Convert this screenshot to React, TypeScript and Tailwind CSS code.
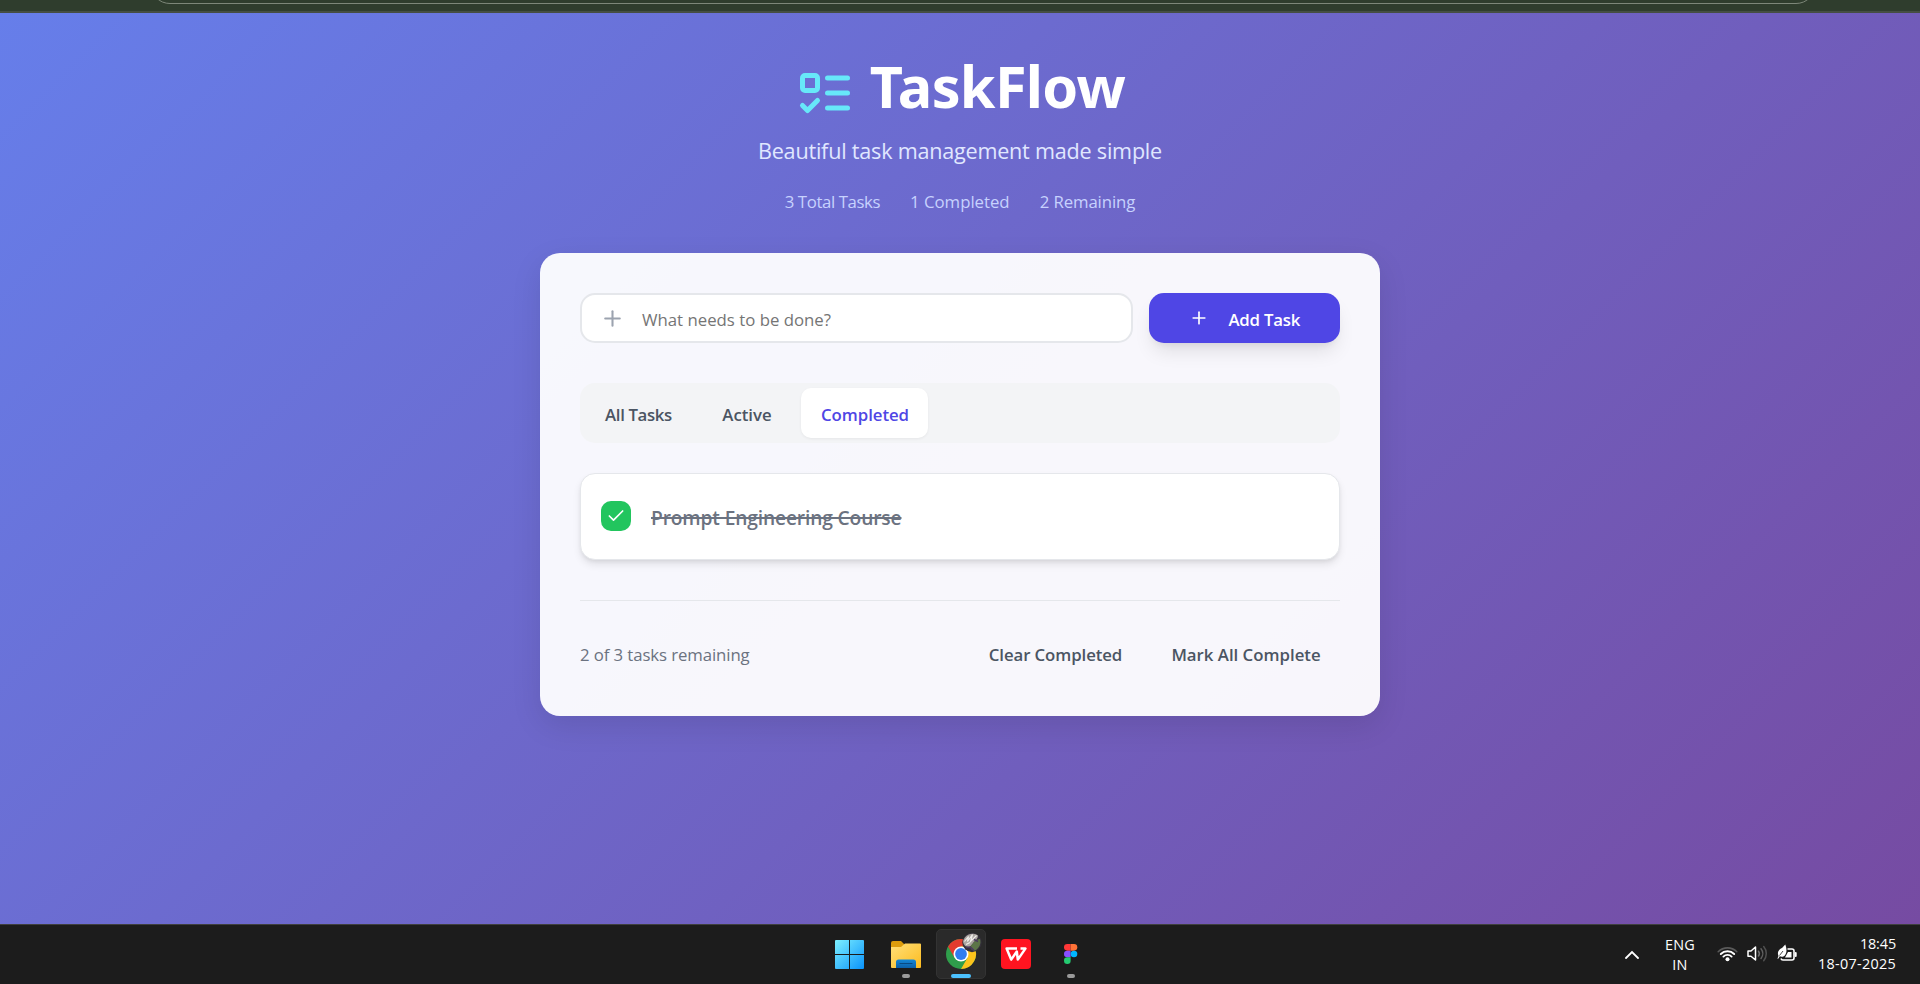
import React from "react";

type IconProps = { className: string; children: React.ReactNode };

function StrokeIcon({ className, children }: IconProps) {
  return (
    <svg
      className={className}
      viewBox="0 0 24 24"
      fill="none"
      stroke="currentColor"
      strokeWidth="2"
      strokeLinecap="round"
      strokeLinejoin="round"
    >
      {children}
    </svg>
  );
}

function PlusIcon({ className }: { className: string }) {
  return (
    <StrokeIcon className={className}>
      <path d="M5 12h14" />
      <path d="M12 5v14" />
    </StrokeIcon>
  );
}

function BrowserEdge() {
  return (
    <div className="flex h-[13px] shrink-0 justify-center overflow-hidden border-b-2 border-[#454e43] bg-[#2f3d2d] pl-[45px]">
      <div className="-mt-9 h-10 w-[1666px] rounded-[20px] border border-[#7d8779] bg-[#2f3d2d]" />
    </div>
  );
}

function Header() {
  return (
    <header className="flex flex-col items-center">
      <div className="flex h-[60px] gap-[15px]">
        <StrokeIcon className="mt-[7px] size-[60px] text-[#67e8f9]">
          <rect x="3" y="5" width="6" height="6" rx="1" />
          <path d="m3 17 2 2 4-4" />
          <path d="M13 6h8" />
          <path d="M13 12h8" />
          <path d="M13 18h8" />
        </StrokeIcon>
        <h1 className="font-['Noto_Sans',sans-serif] text-[57.6px] leading-[60px] font-bold tracking-[-0.67px] text-white">
          TaskFlow
        </h1>
      </div>
      <p className="mt-5 text-[21.6px] leading-[29px] tracking-[-0.22px] text-[#e0e7ff]">
        Beautiful task management made simple
      </p>
      <div className="mt-[25px] flex gap-[30px] text-[16.8px] leading-[23px] text-[#c7d2fe]">
        <span className="tracking-[-0.4px]">3 Total Tasks</span>
        <span className="tracking-[-0.02px]">1 Completed</span>
        <span className="tracking-[-0.1px]">2 Remaining</span>
      </div>
    </header>
  );
}

function TaskCard() {
  return (
    <main className="mx-auto mt-10 h-[463px] w-[840px] rounded-[20px] bg-white/95 p-10 text-[16.8px] shadow-[0_10px_30px_rgba(0,0,0,0.1)]">
      <div className="flex h-[50px] gap-4">
        <div className="flex flex-1 items-center gap-[17px] rounded-[15px] border-2 border-[#e5e7eb] bg-white pl-[18px]">
          <PlusIcon className="size-[25px] text-[#9ca3af]" />
          <span className="pt-[3px] leading-6 text-[#757575]">What needs to be done?</span>
        </div>
        <button className="flex w-[191px] items-center gap-[19.5px] rounded-[15px] bg-[#4f46e5] pl-10 font-semibold text-white shadow-[0_12px_19px_-4px_rgba(0,0,0,0.1),0_5px_8px_-5px_rgba(0,0,0,0.1)]">
          <PlusIcon className="size-5" />
          <span className="pt-[3px] leading-6 tracking-[-0.22px]">Add Task</span>
        </button>
      </div>

      <nav className="mt-10 flex h-[60px] gap-[10px] rounded-[15px] bg-[#f3f4f6] p-[5px] font-semibold text-[#4b5563]">
        <button className="w-[107px] rounded-[10px] pt-[4px] tracking-[-0.35px]">All Tasks</button>
        <button className="w-[89px] rounded-[10px] pt-[4px] pl-px">Active</button>
        <button className="w-[127px] rounded-[10px] bg-white pt-[4px] pl-px tracking-[-0.05px] text-[#4f46e5] shadow-[0_1px_3px_rgba(0,0,0,0.06)]">
          Completed
        </button>
      </nav>

      <div className="mt-[30px] flex h-[87px] items-center gap-5 rounded-[15px] border border-[#e5e7eb] bg-white px-5 shadow-[0_5px_8px_-1px_rgba(0,0,0,0.1),0_2px_5px_-2px_rgba(0,0,0,0.1)]">
        <div className="mb-px flex size-[30px] items-center justify-center rounded-[10px] bg-[#22c55e] text-white">
          <StrokeIcon className="size-5">
            <path d="M20 6 9 17l-5-5" />
          </StrokeIcon>
        </div>
        <span className="pt-[3px] text-[19.2px] leading-7 font-semibold tracking-[-0.14px] text-[#6b7280] line-through decoration-2">
          Prompt Engineering Course
        </span>
      </div>

      <footer className="mt-10 flex h-[76px] items-center justify-between border-t border-[#e5e7eb] pt-[32px] text-[#4b5563]">
        <span className="tracking-[-0.1px] text-[#6b7280]">2 of 3 tasks remaining</span>
        <div className="flex gap-[10px] font-semibold">
          <button className="w-[173px] tracking-[-0.09px]">Clear Completed</button>
          <button className="w-[188px]">Mark All Complete</button>
        </div>
      </footer>
    </main>
  );
}

function StartIcon() {
  return (
    <svg className="-ml-[3px] size-[29px]" viewBox="0 0 29 29">
      <defs>
        <linearGradient id="win" x1="0" y1="0" x2="1" y2="1">
          <stop offset="0" stopColor="#7df0ff" />
          <stop offset="1" stopColor="#0a93fb" />
        </linearGradient>
      </defs>
      <path
        fill="url(#win)"
        d="M1 0h13v14H0V1a1 1 0 0 1 1-1ZM15 0h13a1 1 0 0 1 1 1v13H15ZM0 15h14v14H1a1 1 0 0 1-1-1ZM15 15h14v13a1 1 0 0 1-1 1H15Z"
      />
    </svg>
  );
}

function FolderIcon() {
  return (
    <svg className="h-[27px] w-[30px]" viewBox="0 0 30 27">
      <defs>
        <linearGradient id="fold" x1="0" y1="0" x2="1" y2="1">
          <stop offset="0" stopColor="#ffe07a" />
          <stop offset="1" stopColor="#fdbb1e" />
        </linearGradient>
        <linearGradient id="tray" x1="0" y1="0" x2="0" y2="1">
          <stop offset="0" stopColor="#1488d8" />
          <stop offset="1" stopColor="#0c5fa8" />
        </linearGradient>
      </defs>
      <path d="M0 2a2 2 0 0 1 2-2h8l3 3v3H0Z" fill="#dc9c0c" />
      <path d="M0 6h10l4-3.5h15a1 1 0 0 1 1 1V26a1 1 0 0 1-1 1H1a1 1 0 0 1-1-1Z" fill="url(#fold)" />
      <path d="M5 27v-6a2.500 2.500 0 0 1 2.500-2.500h15A2.500 2.500 0 0 1 25 21v6Z" fill="url(#tray)" />
      <path d="M9 22.500h12" stroke="#094a82" strokeWidth="1" strokeLinecap="round" />
    </svg>
  );
}

function ChromeIcon() {
  return (
    <svg className="size-10 overflow-visible" viewBox="0 0 40 40">
      <circle cx="20" cy="20" r="15" fill="#2f9e4b" />
      <path d="M7 12.500A15 15 0 0 1 33 12.500H20L13.500 23.750Z" fill="#e33b2e" />
      <path d="M20 12.500H33A15 15 0 0 1 20 35L26.500 23.750Z" fill="#fcc31c" />
      <circle cx="20" cy="20" r="7.500" fill="#fff" />
      <circle cx="20" cy="20" r="5.900" fill="#2f7df0" />
      <g transform="translate(0 4.500)">
        <circle cx="31" cy="4" r="9.700" fill="#34303a" />
        <path d="M22 3.500a9.500 9.500 0 0 1 15-6.500c0 3-2 4.500-4 6.500s-3 5-6 5c-2 0-4.500-2-5-5Z" fill="#aaa5a0" />
        <path d="m23.500 3 4-5-1 5 5-7-2 7 6-6M25 6l4-2" stroke="#efedea" strokeWidth="1.200" fill="none" />
        <path d="M30 7c3-3 5-6 9-6.500 1.500 5-1 9.500-5 11.500-3 0-5.500-2-4-5Z" fill="#5c7548" />
        <path d="m25 8.500 5 .5 3 3M33 1l4 2" stroke="#4b3a5f" strokeWidth="1.500" fill="none" />
      </g>
    </svg>
  );
}

function WpsIcon() {
  return (
    <svg className="size-[30px]" viewBox="0 0 30 30">
      <rect width="30" height="30" rx="4" fill="#ff1420" />
      <path
        d="M16 9.600H5.600L10.200 20.600 15.800 12.500 16.800 20.600 24.400 9.600H19.500"
        fill="none"
        stroke="#fff"
        strokeWidth="2.500"
        strokeLinejoin="round"
      />
    </svg>
  );
}

function FigmaIcon() {
  return (
    <svg className="h-5 w-[13.3px]" viewBox="0 0 40 60">
      <path d="M20 0H10a10 10 0 0 0 0 20h10Z" fill="#ff3737" />
      <path d="M20 0h10a10 10 0 0 1 0 20H20Z" fill="#ff7237" />
      <path d="M20 20H10a10 10 0 0 0 0 20h10Z" fill="#874fff" />
      <circle cx="30" cy="30" r="10" fill="#00b6ff" />
      <path d="M20 40H10a10 10 0 1 0 10 10Z" fill="#24cb71" />
    </svg>
  );
}

type SlotProps = { children: React.ReactNode; state?: "active" | "open" };

function TaskbarSlot({ children, state }: SlotProps) {
  return (
    <div
      className={
        state === "active"
          ? "relative flex size-[50px] items-center justify-center rounded-[5px] border border-[#333333] bg-[#2a2a2a]"
          : "relative flex size-[50px] items-center justify-center"
      }
    >
      {children}
      {state === "active" && (
        <span className="absolute bottom-0 left-[14px] h-1 w-5 rounded-full bg-[#4cc2ff]" />
      )}
      {state === "open" && (
        <span className="absolute bottom-px left-[21px] h-1 w-2 rounded-full bg-[#9a9a9a]" />
      )}
    </div>
  );
}

function SystemTray() {
  return (
    <div className="flex flex-1 items-center justify-end pr-6 text-white">
      <svg className="mr-[26px] h-[9px] w-[14px]" viewBox="0 0 14 9">
        <path d="m1 8 6-6 6 6" fill="none" stroke="#fff" strokeWidth="1.800" strokeLinecap="round" />
      </svg>
      <div className="mr-[22px] w-[30px] pt-px text-center text-[14.4px] leading-5 tracking-[0.2px]">
        <p>ENG</p>
        <p>IN</p>
      </div>
      <div className="mr-[20px] flex items-center gap-[9px]">
        <svg className="-mt-px h-[17px] w-[21px]" viewBox="0 0 21 17" fill="none" strokeWidth="1.600" strokeLinecap="round">
          <path d="M1.200 6.700a13.200 13.200 0 0 1 18.600 0" stroke="#5a5a5a" />
          <path d="M3.800 9a9.500 9.500 0 0 1 13.400 0" stroke="#fff" strokeWidth="1.900" />
          <path d="M6.400 11.600a5.800 5.800 0 0 1 8.200 0" stroke="#fff" strokeWidth="1.900" />
          <circle cx="10.500" cy="14.300" r="2" fill="#fff" />
        </svg>
        <svg className="-mt-px h-[17px] w-[21px]" viewBox="0 0 21 17" fill="none" strokeWidth="1.500" strokeLinecap="round" strokeLinejoin="round">
          <path d="M1 6h3l4.500-4v13L4 11.200H1Z" stroke="#fff" />
          <path d="M11.500 6.200a4 4 0 0 1 0 4.800" stroke="#707070" />
          <path d="M14 3.800a7.500 7.500 0 0 1 0 9.600" stroke="#606060" />
          <path d="M16.700 1.500a11 11 0 0 1 0 14.200" stroke="#505050" />
        </svg>
        <svg className="-mt-[2px] h-[19px] w-[21px]" viewBox="0 0 21 19" fill="none" strokeLinejoin="round">
          <path d="M10.500 5H15a2 2 0 0 1 2 2v7a2 2 0 0 1-2 2H6a2 2 0 0 1-2-1.500" stroke="#fff" strokeWidth="1.600" />
          <path d="M18.700 9v3" stroke="#fff" strokeWidth="2" strokeLinecap="round" />
          <path d="M11 8h3.500v5.500H8Z" fill="#fff" />
          <path d="M8.300.500c1.300 3.500 2 8-.500 11-1.500 1.500-3.500 1.500-5 .800L1 15l-.500-.500 1-2.500C-.500 7 3 5 5 4Z" fill="#fff" />
          <path d="M2.500 11.500 6 7" stroke="#1c1c1c" strokeWidth=".8" />
        </svg>
      </div>
      <div className="text-right text-[14.4px] leading-5 whitespace-nowrap">
        <p className="tracking-[-0.12px]">18:45</p>
        <p className="tracking-[0.29px]">18-07-2025</p>
      </div>
    </div>
  );
}

function Taskbar() {
  return (
    <div className="flex h-[60px] shrink-0 items-center border-t border-[#3f3f3f] bg-[#1c1c1c] pb-px">
      <div className="flex-1" />
      <div className="flex gap-[5px] pl-[26px]">
        <TaskbarSlot>
          <StartIcon />
        </TaskbarSlot>
        <TaskbarSlot state="open">
          <FolderIcon />
        </TaskbarSlot>
        <TaskbarSlot state="active">
          <ChromeIcon />
        </TaskbarSlot>
        <TaskbarSlot>
          <WpsIcon />
        </TaskbarSlot>
        <TaskbarSlot state="open">
          <FigmaIcon />
        </TaskbarSlot>
      </div>
      <SystemTray />
    </div>
  );
}

export default function App() {
  return (
    <div className="flex h-[984px] w-[1920px] flex-col overflow-hidden font-['Open_Sans',sans-serif]">
      <BrowserEdge />
      <div className="min-h-0 flex-1 bg-[linear-gradient(135deg,#667eea_0%,#764ba2_100%)] pt-[43px]">
        <Header />
        <TaskCard />
      </div>
      <Taskbar />
    </div>
  );
}
